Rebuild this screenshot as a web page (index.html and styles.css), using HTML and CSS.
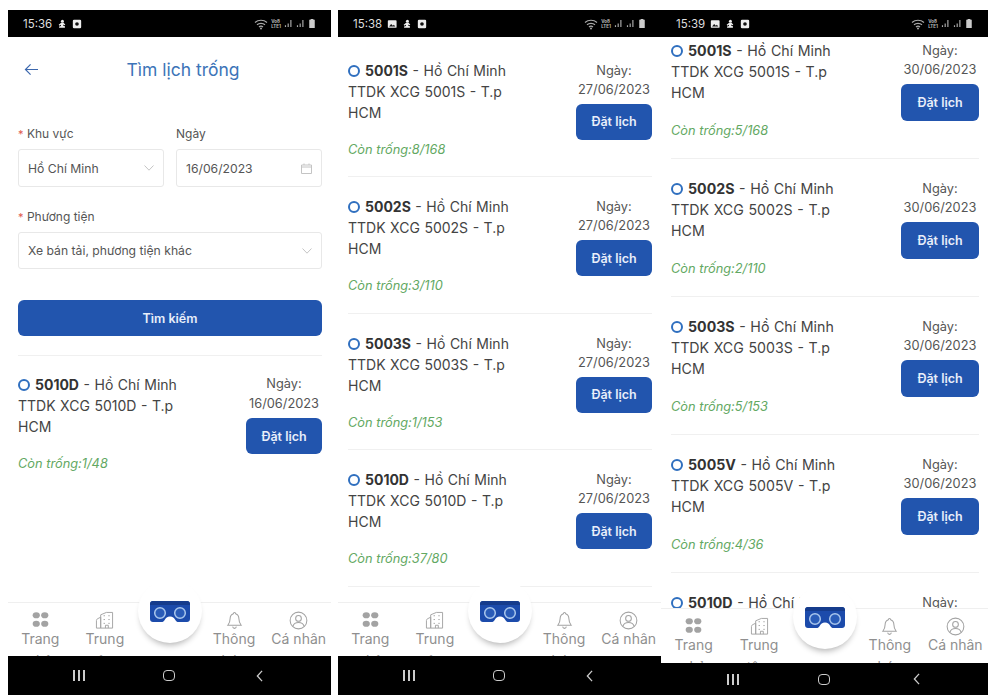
FILE: index.html
```html
<!DOCTYPE html>
<html lang="vi">
<head>
    <meta charset="UTF-8">
    <meta name="viewport" content="width=device-width, initial-scale=1.0">
    <title>Tìm lịch trống</title>
    <link rel="stylesheet" href="styles.css">
</head>
<body>
    <svg class="icon-sprite" width="0" height="0">
        <symbol id="i-person" viewBox="0 0 12 12"><circle cx="6.5" cy="2.6" r="1.8" fill="#eee"/><path d="M2 7l3-2.4h3l2 2.2-1.2.8L7.5 6.500V8l2 .8v1.700H2.500V9l2.300-.7V6.800L3 8z" fill="#eee"/></symbol>
        <symbol id="i-shot" viewBox="0 0 12 12"><rect x="1" y="1" width="10" height="10" rx="1.500" fill="#eee"/><circle cx="6" cy="6" r="2.200" fill="#111"/></symbol>
        <symbol id="i-image" viewBox="0 0 12 12"><rect x="1" y="1.500" width="10.500" height="9" rx="1" fill="#eee"/><path d="M2.500 9l2.500-3 2 2 1.200-1.200L10 9z" fill="#111"/></symbol>
        <symbol id="i-wifi" viewBox="0 0 14 12"><path d="M1 4.500c3.300-3 8.700-3 12 0M3 6.800c2.200-2 5.800-2 8 0M5 9c1.100-1 2.900-1 4 0" fill="none" stroke="#aaa" stroke-width="1.200"/><circle cx="7" cy="10.500" r="1" fill="#aaa"/></symbol>
        <symbol id="i-signal" viewBox="0 0 10 10"><path d="M1 7h1.300v2H1zM4 5h1.300v4H4zM7 1h1.300v8H7z" fill="#aaa"/></symbol>
        <symbol id="i-battery" viewBox="0 0 8 12"><path d="M2.500 1h3v1H7v9H1V2h1.500z" fill="#ccc"/></symbol>
        <symbol id="i-grid" viewBox="0 0 18 18"><g fill="#a3a3a3"><ellipse cx="4.500" cy="4.500" rx="3.800" ry="3.300"/><ellipse cx="13.500" cy="4.500" rx="3.800" ry="3.300"/><ellipse cx="4.500" cy="13.500" rx="3.800" ry="3.300"/><ellipse cx="13.500" cy="13.500" rx="3.800" ry="3.300"/></g></symbol>
        <symbol id="i-building" viewBox="0 0 20 20"><g fill="none" stroke="#a3a3a3" stroke-width="1"><path d="M6 18V6.500L3 8c-1 .5-1.500 1-1.500 2v8z"/><path d="M6 18V4l6-2.500h6.500V18z"/><path d="M9 5h1.500M14 5h1.500M9 9h1.500M14 9h1.500M9 13h1.500M14 13h1.500M11 18v-3h3v3"/></g></symbol>
        <symbol id="i-bell" viewBox="0 0 18 20"><path d="M9 1.500c-.8 0-1.200.5-1.200 1.300C5.500 3.600 4.400 5.500 4.400 8c0 3.500-1.200 5.500-2.400 7h14c-1.200-1.500-2.400-3.500-2.400-7 0-2.500-1.100-4.400-3.400-5.200 0-.8-.4-1.300-1.200-1.300zM7 16.500c.3 1.200 1 1.800 2 1.800s1.700-.6 2-1.800" fill="none" stroke="#a3a3a3" stroke-width="1.100"/></symbol>
        <symbol id="i-user" viewBox="0 0 20 20"><g fill="none" stroke="#a3a3a3" stroke-width="1.100"><circle cx="10" cy="10" r="8.800"/><circle cx="10" cy="7.800" r="3"/><path d="M4.200 16c.8-2.700 3-3.800 5.800-3.800s5 1.100 5.800 3.800"/></g></symbol>
        <symbol id="i-vr" viewBox="0 0 40 23"><path d="M3 0h34c1.700 0 3 1.300 3 3v15c0 1.700-1.300 3-3 3h-8.500c-1.500 0-2.400-.8-3.300-2.300-1-1.700-2.400-3.200-5.200-3.200s-4.200 1.500-5.200 3.200c-.9 1.500-1.800 2.300-3.300 2.300H3c-1.700 0-3-1.300-3-3V3c0-1.700 1.300-3 3-3z" fill="#1c4bab"/><path d="M3 0h34c1.700 0 3 1.300 3 3v1H0V3c0-1.700 1.300-3 3-3z" fill="#163c8c"/><circle cx="10" cy="12" r="5.300" fill="#2a5cb8" stroke="#a9c6ec" stroke-width="1.500"/><circle cx="30" cy="12" r="5.300" fill="#2a5cb8" stroke="#a9c6ec" stroke-width="1.500"/></symbol>
    </svg>

    <div class="screens">
        <!-- Search form -->
        <div class="phone">
            <div class="status-bar">
                <span class="status-left">15:36
                    <svg class="status-icon"><use href="#i-person"/></svg>
                    <svg class="status-icon"><use href="#i-shot"/></svg>
                </span>
                <span class="status-right">
                    <svg class="status-wifi"><use href="#i-wifi"/></svg>
                    <span class="volte">Vo8<br>LTE1</span>
                    <svg class="status-signal"><use href="#i-signal"/></svg>
                    <svg class="status-signal"><use href="#i-signal"/></svg>
                    <svg class="status-battery"><use href="#i-battery"/></svg>
                </span>
            </div>
            <div class="content">
                <div class="page-header">
                    <svg class="back-arrow" viewBox="0 0 16 14"><path d="M15 7H1.500M7 1.500L1.500 7 7 12.500" fill="none" stroke="#3c68ae" stroke-width="1.300"/></svg>
                    <h1>Tìm lịch trống</h1>
                </div>
                <form class="search-form">
                    <div class="form-row">
                        <div class="form-group">
                            <label><span class="required">*</span> Khu vực</label>
                            <div class="field">Hồ Chí Minh
                                <svg class="chevron" viewBox="0 0 10 6"><path d="M.5.500L5 5.200 9.500.500" fill="none" stroke="#c4c4c4"/></svg>
                            </div>
                        </div>
                        <div class="form-group">
                            <label>Ngày</label>
                            <div class="field">16/06/2023
                                <svg class="calendar" viewBox="0 0 11 11"><path d="M.5 2h10v8.500H.5zM.5 4h10M3 .5V2M8 .5V2" fill="none" stroke="#c4c4c4"/></svg>
                            </div>
                        </div>
                    </div>
                    <div class="form-group vehicle-group">
                        <label><span class="required">*</span> Phương tiện</label>
                        <div class="field">Xe bán tải, phương tiện khác
                            <svg class="chevron" viewBox="0 0 10 6"><path d="M.5.500L5 5.200 9.500.500" fill="none" stroke="#c4c4c4"/></svg>
                        </div>
                    </div>
                    <button type="button" class="search-btn">Tìm kiếm</button>
                </form>
                <div class="slot-list result-list">
                    <div class="slot">
                        <div class="slot-info">
                            <p class="slot-name"><span class="ring"></span><b>5010D</b> - Hồ Chí Minh</p>
                            <p>TTDK XCG 5010D - T.p HCM</p>
                            <p class="slot-free">Còn trống:1/48</p>
                        </div>
                        <div class="slot-side">
                            <span class="slot-day">Ngày:</span>
                            <span>16/06/2023</span>
                            <button type="button" class="book-btn">Đặt lịch</button>
                        </div>
                    </div>
                </div>
            </div>
            <div class="tab-bar">
                <div class="tab"><svg class="tab-grid"><use href="#i-grid"/></svg>Trang chủ</div>
                <div class="tab"><svg class="tab-icon"><use href="#i-building"/></svg>Trung tâm</div>
                <div class="tab tab-center"></div>
                <div class="tab"><svg class="tab-icon"><use href="#i-bell"/></svg>Thông báo</div>
                <div class="tab"><svg class="tab-icon"><use href="#i-user"/></svg>Cá nhân</div>
                <div class="vr-button"><svg class="vr-icon"><use href="#i-vr"/></svg></div>
            </div>
            <div class="nav-bar">
                <span class="nav-recent"><i></i><i></i><i></i></span>
                <span class="nav-home"></span>
                <svg class="nav-back" viewBox="0 0 8 14"><path d="M7 1L1.500 7 7 13" fill="none" stroke="#ccc" stroke-width="1.500"/></svg>
            </div>
        </div>

        <!-- Results 27/06 -->
        <div class="phone">
            <div class="status-bar">
                <span class="status-left">15:38
                    <svg class="status-icon"><use href="#i-image"/></svg>
                    <svg class="status-icon"><use href="#i-person"/></svg>
                    <svg class="status-icon"><use href="#i-shot"/></svg>
                </span>
                <span class="status-right">
                    <svg class="status-wifi"><use href="#i-wifi"/></svg>
                    <span class="volte">Vo8<br>LTE1</span>
                    <svg class="status-signal"><use href="#i-signal"/></svg>
                    <svg class="status-signal"><use href="#i-signal"/></svg>
                    <svg class="status-battery"><use href="#i-battery"/></svg>
                </span>
            </div>
            <div class="content">
                <div class="slot-list">
                    <div class="slot">
                        <div class="slot-info">
                            <p class="slot-name"><span class="ring"></span><b>5001S</b> - Hồ Chí Minh</p>
                            <p>TTDK XCG 5001S - T.p HCM</p>
                            <p class="slot-free">Còn trống:8/168</p>
                        </div>
                        <div class="slot-side"><span class="slot-day">Ngày:</span><span>27/06/2023</span><button type="button" class="book-btn">Đặt lịch</button></div>
                    </div>
                    <div class="slot">
                        <div class="slot-info">
                            <p class="slot-name"><span class="ring"></span><b>5002S</b> - Hồ Chí Minh</p>
                            <p>TTDK XCG 5002S - T.p HCM</p>
                            <p class="slot-free">Còn trống:3/110</p>
                        </div>
                        <div class="slot-side"><span class="slot-day">Ngày:</span><span>27/06/2023</span><button type="button" class="book-btn">Đặt lịch</button></div>
                    </div>
                    <div class="slot">
                        <div class="slot-info">
                            <p class="slot-name"><span class="ring"></span><b>5003S</b> - Hồ Chí Minh</p>
                            <p>TTDK XCG 5003S - T.p HCM</p>
                            <p class="slot-free">Còn trống:1/153</p>
                        </div>
                        <div class="slot-side"><span class="slot-day">Ngày:</span><span>27/06/2023</span><button type="button" class="book-btn">Đặt lịch</button></div>
                    </div>
                    <div class="slot">
                        <div class="slot-info">
                            <p class="slot-name"><span class="ring"></span><b>5010D</b> - Hồ Chí Minh</p>
                            <p>TTDK XCG 5010D - T.p HCM</p>
                            <p class="slot-free">Còn trống:37/80</p>
                        </div>
                        <div class="slot-side"><span class="slot-day">Ngày:</span><span>27/06/2023</span><button type="button" class="book-btn">Đặt lịch</button></div>
                    </div>
                </div>
            </div>
            <div class="tab-bar">
                <div class="tab"><svg class="tab-grid"><use href="#i-grid"/></svg>Trang chủ</div>
                <div class="tab"><svg class="tab-icon"><use href="#i-building"/></svg>Trung tâm</div>
                <div class="tab tab-center"></div>
                <div class="tab"><svg class="tab-icon"><use href="#i-bell"/></svg>Thông báo</div>
                <div class="tab"><svg class="tab-icon"><use href="#i-user"/></svg>Cá nhân</div>
                <div class="vr-button"><svg class="vr-icon"><use href="#i-vr"/></svg></div>
            </div>
            <div class="nav-bar">
                <span class="nav-recent"><i></i><i></i><i></i></span>
                <span class="nav-home"></span>
                <svg class="nav-back" viewBox="0 0 8 14"><path d="M7 1L1.500 7 7 13" fill="none" stroke="#ccc" stroke-width="1.500"/></svg>
            </div>
        </div>

        <!-- Results 30/06, scrolled -->
        <div class="phone phone-wide">
            <div class="status-bar">
                <span class="status-left">15:39
                    <svg class="status-icon"><use href="#i-image"/></svg>
                    <svg class="status-icon"><use href="#i-person"/></svg>
                    <svg class="status-icon"><use href="#i-shot"/></svg>
                </span>
                <span class="status-right">
                    <svg class="status-wifi"><use href="#i-wifi"/></svg>
                    <span class="volte">Vo8<br>LTE1</span>
                    <svg class="status-signal"><use href="#i-signal"/></svg>
                    <svg class="status-signal"><use href="#i-signal"/></svg>
                    <svg class="status-battery"><use href="#i-battery"/></svg>
                </span>
            </div>
            <div class="content">
                <div class="slot-list">
                    <div class="slot">
                        <div class="slot-info">
                            <p class="slot-name"><span class="ring"></span><b>5001S</b> - Hồ Chí Minh</p>
                            <p>TTDK XCG 5001S - T.p HCM</p>
                            <p class="slot-free">Còn trống:5/168</p>
                        </div>
                        <div class="slot-side"><span class="slot-day">Ngày:</span><span>30/06/2023</span><button type="button" class="book-btn">Đặt lịch</button></div>
                    </div>
                    <div class="slot">
                        <div class="slot-info">
                            <p class="slot-name"><span class="ring"></span><b>5002S</b> - Hồ Chí Minh</p>
                            <p>TTDK XCG 5002S - T.p HCM</p>
                            <p class="slot-free">Còn trống:2/110</p>
                        </div>
                        <div class="slot-side"><span class="slot-day">Ngày:</span><span>30/06/2023</span><button type="button" class="book-btn">Đặt lịch</button></div>
                    </div>
                    <div class="slot">
                        <div class="slot-info">
                            <p class="slot-name"><span class="ring"></span><b>5003S</b> - Hồ Chí Minh</p>
                            <p>TTDK XCG 5003S - T.p HCM</p>
                            <p class="slot-free">Còn trống:5/153</p>
                        </div>
                        <div class="slot-side"><span class="slot-day">Ngày:</span><span>30/06/2023</span><button type="button" class="book-btn">Đặt lịch</button></div>
                    </div>
                    <div class="slot">
                        <div class="slot-info">
                            <p class="slot-name"><span class="ring"></span><b>5005V</b> - Hồ Chí Minh</p>
                            <p>TTDK XCG 5005V - T.p HCM</p>
                            <p class="slot-free">Còn trống:4/36</p>
                        </div>
                        <div class="slot-side"><span class="slot-day">Ngày:</span><span>30/06/2023</span><button type="button" class="book-btn">Đặt lịch</button></div>
                    </div>
                    <div class="slot">
                        <div class="slot-info">
                            <p class="slot-name"><span class="ring"></span><b>5010D</b> - Hồ Chí Minh</p>
                            <p>TTDK XCG 5010D - T.p HCM</p>
                        </div>
                        <div class="slot-side"><span class="slot-day">Ngày:</span><span>30/06/2023</span><button type="button" class="book-btn">Đặt lịch</button></div>
                    </div>
                </div>
            </div>
            <div class="tab-bar">
                <div class="tab"><svg class="tab-grid"><use href="#i-grid"/></svg>Trang chủ</div>
                <div class="tab"><svg class="tab-icon"><use href="#i-building"/></svg>Trung tâm</div>
                <div class="tab tab-center"></div>
                <div class="tab"><svg class="tab-icon"><use href="#i-bell"/></svg>Thông báo</div>
                <div class="tab"><svg class="tab-icon"><use href="#i-user"/></svg>Cá nhân</div>
                <div class="vr-button"><svg class="vr-icon"><use href="#i-vr"/></svg></div>
            </div>
            <div class="nav-bar">
                <span class="nav-recent"><i></i><i></i><i></i></span>
                <span class="nav-home"></span>
                <svg class="nav-back" viewBox="0 0 8 14"><path d="M7 1L1.500 7 7 13" fill="none" stroke="#ccc" stroke-width="1.500"/></svg>
            </div>
        </div>
    </div>
</body>
</html>
```

FILE: styles.css
```css
html, body {
    height: 100%;
}
body {
    font-family: 'Inter', 'Roboto', sans-serif;
    margin: 0;
    background-color: #fff;
    color: #444;
    overflow: hidden;
}
p, h1 {
    margin: 0;
}
.icon-sprite {
    position: absolute;
}
.screens {
    display: flex;
    padding: 10px 0 0 8px;
    height: 685px;
}
.phone {
    display: flex;
    flex-direction: column;
    width: 323px;
    margin-right: 7px;
    background: #fff;
    overflow: hidden;
}
.phone-wide {
    width: 327px;
    margin-left: -7px;
    margin-right: 0;
}
.status-bar {
    display: flex;
    justify-content: space-between;
    align-items: center;
    flex: none;
    height: 27px;
    padding: 0 15px;
    background: #000;
    color: #ddd;
    font-size: 11.500px;
}
.status-left, .status-right {
    display: flex;
    align-items: center;
}
.status-right {
    gap: 3px;
}
.status-left {
    gap: 5px;
}
.status-icon {
    width: 10px;
    height: 10px;
}
.status-wifi {
    width: 14px;
    height: 12px;
}
.volte {
    font-size: 4.500px;
    line-height: 5px;
    font-weight: 700;
    color: #bbb;
}
.status-signal {
    width: 9px;
    height: 9px;
}
.status-battery {
    width: 8px;
    height: 11px;
}
.content {
    flex: 1;
    min-height: 0;
    padding: 0 9px 0 10px;
    overflow: hidden;
}
.page-header {
    display: flex;
    align-items: center;
    justify-content: center;
    position: relative;
    height: 64px;
}
.page-header h1 {
    padding-left: 26px;
    font-size: 17.500px;
    font-weight: 400;
    color: #3c74b8;
}
.back-arrow {
    position: absolute;
    left: 6px;
    top: 26px;
    width: 15px;
    height: 13px;
}
.search-form {
    padding-top: 25px;
}
.form-row {
    display: flex;
    gap: 12px;
}
.form-group {
    flex: 1;
}
.form-group label {
    display: block;
    font-size: 12px;
    line-height: 16px;
    margin-bottom: 7px;
    color: #555;
}
.required {
    color: #e05a4f;
    font-size: 11px;
}
.field {
    display: flex;
    align-items: center;
    justify-content: space-between;
    height: 38px;
    box-sizing: border-box;
    padding: 0 9px;
    border: 1px solid #e8e8e8;
    border-radius: 3px;
    font-size: 12.200px;
    color: #555;
}
.chevron {
    width: 10px;
    height: 6px;
}
.calendar {
    width: 11px;
    height: 11px;
}
.vehicle-group {
    margin-top: 22px;
}
.vehicle-group .field {
    height: 37px;
}
.search-btn {
    display: block;
    width: 100%;
    height: 36px;
    margin-top: 31px;
    border: none;
    border-radius: 6px;
    background: #2255ae;
    color: #e8eefa;
    font-family: inherit;
    font-size: 12.500px;
    font-weight: 600;
}
.slot-list {
    padding-top: 3.500px;
}
.phone-wide .slot-list {
    padding-top: 0;
    margin-top: -16px;
}
.result-list {
    margin-top: 19px;
    padding-top: 0;
    border-top: 1px solid #f0f0f0;
}
.slot {
    display: flex;
    justify-content: space-between;
    height: 136.500px;
    box-sizing: border-box;
    padding-top: 20px;
    border-bottom: 1px solid #f0f0f0;
}
.phone-wide .slot {
    height: 138px;
}
.result-list .slot {
    padding-top: 19px;
    border-bottom: none;
}
.slot-info {
    width: 180px;
    margin-top: -1px;
    font-size: 14px;
    word-spacing: 0.600px;
    line-height: 21px;
}
.phone-wide .slot-info {
    font-size: 14.200px;
}
.slot-name {
    white-space: nowrap;
}
.slot-name b {
    font-weight: 700;
    color: #333;
}
.ring {
    display: inline-block;
    width: 12px;
    height: 12px;
    box-sizing: border-box;
    margin-right: 5px;
    border: 2.500px solid #2f6fbf;
    border-radius: 50%;
    vertical-align: -1px;
}
.slot-free {
    margin-top: 16px;
    font-size: 12.800px;
    word-spacing: 0;
    font-style: italic;
    color: #62a862;
}
.phone-wide .slot-free {
    margin-top: 17px;
}
.slot-side {
    display: flex;
    flex-direction: column;
    align-items: center;
    width: 76px;
    font-size: 12.800px;
    line-height: 19px;
    color: #555;
}
.result-list .slot-day {
    margin: -1px 0 1px;
}
.book-btn {
    width: 76px;
    height: 36px;
    margin-top: 5px;
    border: none;
    border-radius: 6px;
    background: #2255ae;
    color: #e8eefa;
    font-family: inherit;
    font-size: 12.500px;
    font-weight: 600;
}
.phone-wide .slot-side {
    width: 78px;
}
.phone-wide .book-btn {
    width: 78px;
    height: 37px;
}
.tab-bar {
    display: grid;
    grid-template-columns: repeat(5, 1fr);
    flex: none;
    position: relative;
    height: 54px;
    border-top: 1px solid #efefef;
    box-sizing: border-box;
    background: #fff;
}
.phone-wide .tab-bar {
    height: 55px;
}
.tab {
    display: flex;
    flex-direction: column;
    align-items: center;
    height: 53px;
    overflow: hidden;
    padding-top: 8px;
    box-sizing: border-box;
    font-size: 14px;
    line-height: 22px;
    color: #8f8f8f;
    text-align: center;
}
.phone-wide .tab {
    height: 54px;
}
.tab-grid {
    flex: none;
    width: 17px;
    height: 17px;
}
.tab-icon {
    flex: none;
    width: 19px;
    height: 19px;
    margin-bottom: -2px;
}
.vr-button {
    position: absolute;
    left: 50%;
    bottom: 13px;
    width: 64px;
    height: 64px;
    margin-left: -32px;
    border-radius: 50%;
    background: #fff;
    box-shadow: 0 5px 6px -3px rgba(0, 0, 0, 0.3);
    display: flex;
    justify-content: center;
    padding-top: 22px;
    box-sizing: border-box;
}
.phone-wide .vr-button {
    bottom: 14px;
}
.vr-icon {
    width: 40px;
    height: 23px;
}
.nav-bar {
    display: grid;
    grid-template-columns: repeat(3, 1fr);
    justify-items: center;
    align-items: center;
    flex: none;
    height: 39px;
    padding: 0 26px;
    background: #000;
}
.phone-wide .nav-bar {
    height: 32px;
}
.nav-recent {
    display: flex;
    gap: 3px;
}
.nav-recent i {
    display: block;
    width: 2px;
    height: 11px;
    background: #ccc;
}
.nav-home {
    width: 12px;
    height: 11px;
    box-sizing: border-box;
    border: 1.500px solid #ccc;
    border-radius: 4px;
}
.nav-back {
    width: 7px;
    height: 12px;
}
```
